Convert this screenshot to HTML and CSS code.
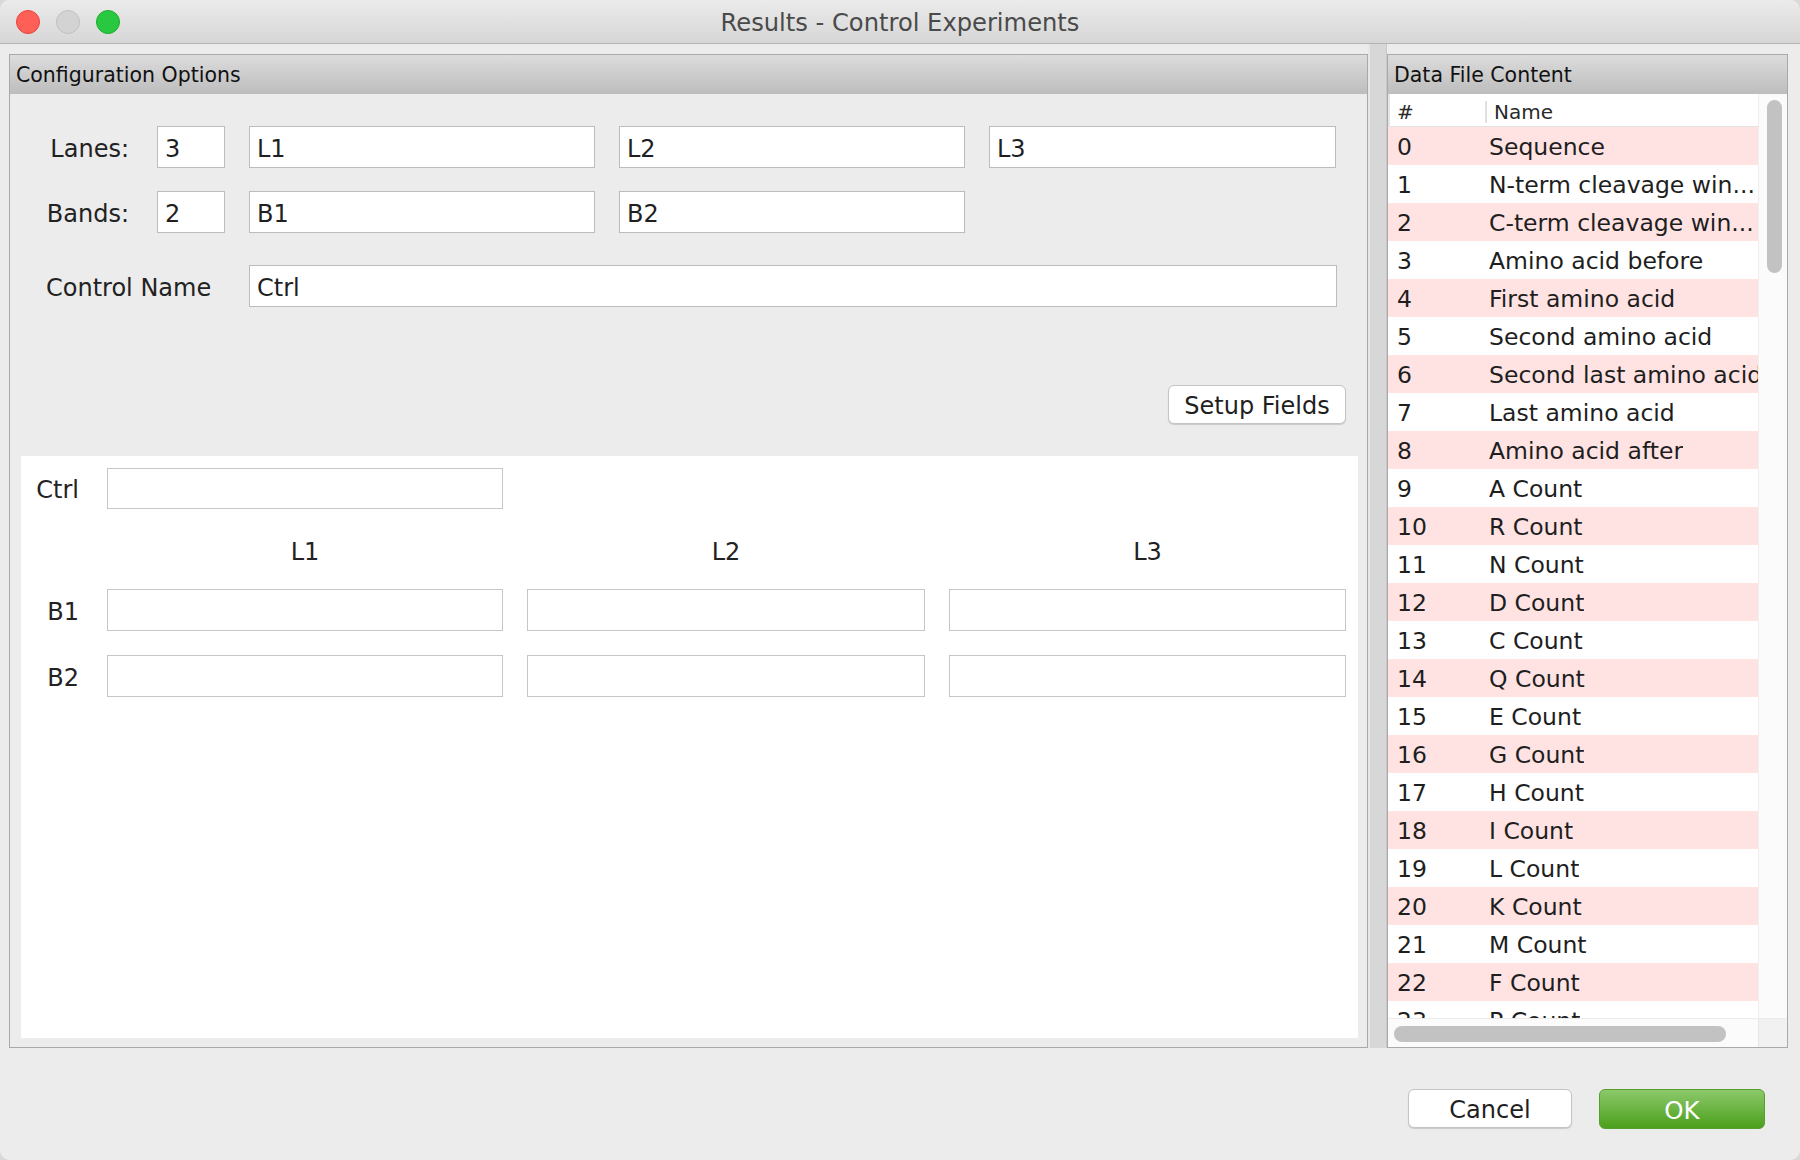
FILE: index.html
```html
<!DOCTYPE html>
<html>
<head>
<meta charset="utf-8">
<title>Results - Control Experiments</title>
<link rel="stylesheet" href="styles.css">
</head>
<body>
<div class="window">
  <div class="titlebar">
    <div class="lights">
      <span class="light red"></span>
      <span class="light gray"></span>
      <span class="light green"></span>
    </div>
    <div class="title">Results - Control Experiments</div>
    <div class="spacer"></div>
  </div>

  <div class="main">
    <section class="panel config">
      <div class="panel-header">Configuration Options</div>
      <div class="config-body">
        <div class="form-row row-lanes">
          <span class="row-label">Lanes:</span>
          <input class="field count" value="3">
          <input class="field name" value="L1">
          <input class="field name" value="L2">
          <input class="field name wide" value="L3">
        </div>
        <div class="form-row row-bands">
          <span class="row-label">Bands:</span>
          <input class="field count" value="2">
          <input class="field name" value="B1">
          <input class="field name" value="B2">
        </div>
        <div class="form-row row-control">
          <span class="row-label control-label">Control Name</span>
          <input class="field control" value="Ctrl">
        </div>
        <div class="setup-row">
          <button class="btn setup">Setup Fields</button>
        </div>
        <div class="grid-panel">
          <div class="grid-row ctrl-row">
            <span class="grid-label">Ctrl</span>
            <input class="field cell" value="">
          </div>
          <div class="grid-row head-row">
            <span></span>
            <span class="col-head">L1</span>
            <span class="col-head">L2</span>
            <span class="col-head">L3</span>
          </div>
          <div class="grid-row band-row">
            <span class="grid-label">B1</span>
            <input class="field cell" value="">
            <input class="field cell" value="">
            <input class="field cell" value="">
          </div>
          <div class="grid-row band-row second">
            <span class="grid-label">B2</span>
            <input class="field cell" value="">
            <input class="field cell" value="">
            <input class="field cell" value="">
          </div>
        </div>
      </div>
    </section>

    <div class="divider"></div>

    <section class="panel data">
      <div class="panel-header">Data File Content</div>
      <div class="data-body">
        <div class="table">
          <div class="thead">
            <span class="th th-num">#</span>
            <span class="th th-name">Name</span>
          </div>
          <div class="tbody">
            <div class="tr"><span class="td num">0</span><span class="td nm">Sequence</span></div>
            <div class="tr"><span class="td num">1</span><span class="td nm">N-term cleavage win...</span></div>
            <div class="tr"><span class="td num">2</span><span class="td nm">C-term cleavage win...</span></div>
            <div class="tr"><span class="td num">3</span><span class="td nm">Amino acid before</span></div>
            <div class="tr"><span class="td num">4</span><span class="td nm">First amino acid</span></div>
            <div class="tr"><span class="td num">5</span><span class="td nm">Second amino acid</span></div>
            <div class="tr"><span class="td num">6</span><span class="td nm">Second last amino acid</span></div>
            <div class="tr"><span class="td num">7</span><span class="td nm">Last amino acid</span></div>
            <div class="tr"><span class="td num">8</span><span class="td nm">Amino acid after</span></div>
            <div class="tr"><span class="td num">9</span><span class="td nm">A Count</span></div>
            <div class="tr"><span class="td num">10</span><span class="td nm">R Count</span></div>
            <div class="tr"><span class="td num">11</span><span class="td nm">N Count</span></div>
            <div class="tr"><span class="td num">12</span><span class="td nm">D Count</span></div>
            <div class="tr"><span class="td num">13</span><span class="td nm">C Count</span></div>
            <div class="tr"><span class="td num">14</span><span class="td nm">Q Count</span></div>
            <div class="tr"><span class="td num">15</span><span class="td nm">E Count</span></div>
            <div class="tr"><span class="td num">16</span><span class="td nm">G Count</span></div>
            <div class="tr"><span class="td num">17</span><span class="td nm">H Count</span></div>
            <div class="tr"><span class="td num">18</span><span class="td nm">I Count</span></div>
            <div class="tr"><span class="td num">19</span><span class="td nm">L Count</span></div>
            <div class="tr"><span class="td num">20</span><span class="td nm">K Count</span></div>
            <div class="tr"><span class="td num">21</span><span class="td nm">M Count</span></div>
            <div class="tr"><span class="td num">22</span><span class="td nm">F Count</span></div>
            <div class="tr"><span class="td num">23</span><span class="td nm">P Count</span></div>
          </div>
        </div>
        <div class="vscroll"><div class="vthumb"></div></div>
      </div>
      <div class="hscroll-row">
        <div class="hscroll"><div class="hthumb"></div></div>
        <div class="corner"></div>
      </div>
    </section>
  </div>

  <div class="footer">
    <button class="btn cancel">Cancel</button>
    <button class="btn ok">OK</button>
  </div>
</div>
</body>
</html>
```

FILE: styles.css
```css
* { box-sizing: border-box; }

html, body {
  margin: 0;
  padding: 0;
  background: #d9d9d9;
}

body {
  font-family: "DejaVu Sans", "Liberation Sans", sans-serif;
  color: #1f1f1f;
}

.window {
  width: 1800px;
  height: 1160px;
  background: #ececec;
  border-radius: 10px;
  overflow: hidden;
  display: flex;
  flex-direction: column;
}

/* Title bar */
.titlebar {
  height: 44px;
  flex: none;
  display: grid;
  grid-template-columns: 1fr auto 1fr;
  align-items: center;
  background: linear-gradient(#ebebeb, #d6d6d6);
  border-bottom: 1px solid #b3b3b3;
}

.lights {
  display: flex;
  gap: 16px;
  padding-left: 16px;
  align-items: center;
}

.light {
  width: 24px;
  height: 24px;
  border-radius: 50%;
  display: block;
}

.light.red { background: #fe5f57; border: 1px solid #e2463f; }
.light.gray { background: #d3d3d3; border: 1px solid #c0c0c0; }
.light.green { background: #28c840; border: 1px solid #1eac2f; }

.title {
  font-size: 24.2px;
  color: #4a4a4a;
  line-height: 1;
  padding-top: 4px;
}

/* Main area */
.main {
  height: 1004px;
  flex: none;
  display: flex;
  padding: 10px 12px 0 9px;
}

.panel {
  border: 1px solid #a9a9a9;
  display: flex;
  flex-direction: column;
}

.panel-header {
  height: 39px;
  flex: none;
  background: linear-gradient(#dcdcdc, #bdbdbd);
  font-size: 20.5px;
  line-height: 39px;
  padding-left: 6px;
  padding-top: 1px;
  color: #111;
}

.config {
  width: 1359px;
  background: #ececec;
}

.divider {
  width: 19px;
  margin-top: -10px;
  background: #d7d7d7;
  border-left: 2px solid #e6e6e6;
  border-right: 1px solid #c9c9c9;
}

.data {
  width: 401px;
  background: #fff;
}

/* Config form */
.config-body {
  flex: 1;
  display: flex;
  flex-direction: column;
}

.form-row {
  display: flex;
  align-items: center;
  gap: 24px;
}

.row-lanes { margin-top: 32px; }
.row-bands { margin-top: 23px; }
.row-control { margin-top: 32px; }

.row-label {
  width: 123px;
  padding-right: 4px;
  padding-top: 3px;
  text-align: right;
  font-size: 24px;
  color: #222;
}

.row-label.control-label {
  width: 215px;
  padding-left: 36px;
  padding-right: 0;
  text-align: left;
}

.field {
  height: 42px;
  border: 1px solid #bcbcbc;
  background: #fff;
  font-family: "DejaVu Sans", "Liberation Sans", sans-serif;
  font-size: 24px;
  color: #1f1f1f;
  padding: 4px 7px 0;
  margin: 0;
  outline: none;
  border-radius: 0;
}

.field.count { width: 68px; }
.field.name { width: 346px; }
.field.name.wide { width: 347px; }
.field.control { width: 1088px; }

.setup-row {
  margin-top: 78px;
  display: flex;
  justify-content: flex-end;
  padding-right: 21px;
}

.btn {
  font-family: "DejaVu Sans", "Liberation Sans", sans-serif;
  font-size: 24px;
  color: #1f1f1f;
  background: #fff;
  border: 1px solid #c4c4c4;
  border-radius: 6px;
  box-shadow: 0 1px 1px rgba(0, 0, 0, 0.15);
  padding: 2px 0 0;
  cursor: default;
}

.btn.setup {
  width: 178px;
  height: 39px;
}

/* White grid panel */
.grid-panel {
  flex: 1;
  margin: 32px 9px 9px 11px;
  background: #fff;
  padding-top: 12px;
}

.grid-row {
  display: grid;
  grid-template-columns: 62px 396px 398px 397px;
  column-gap: 24px;
  align-items: center;
}

.grid-label {
  text-align: right;
  padding-right: 4px;
  padding-top: 3px;
  font-size: 24px;
  color: #222;
}

.field.cell {
  width: 100%;
  height: 41px;
  border-color: #c6c6c6;
}

.ctrl-row { height: 41px; }

.head-row {
  height: 28px;
  margin: 29px 0 23px;
}

.col-head {
  text-align: center;
  font-size: 24px;
  color: #222;
}

.band-row { height: 42px; }
.band-row .field.cell { height: 42px; }
.band-row.second { margin-top: 24px; }

/* Data table */
.data-body {
  flex: none;
  height: 924px;
  display: flex;
}

.table {
  width: 370px;
  display: flex;
  flex-direction: column;
  overflow: hidden;
}

.thead {
  height: 33px;
  flex: none;
  display: flex;
  align-items: center;
  padding-top: 3px;
  border-bottom: 1px solid #e3e3e3;
  border-left: 2px solid #e6e6e6;
  font-size: 20px;
  color: #2a2a2a;
}

.th-num {
  width: 97px;
  padding-left: 7px;
  border-right: 2px solid #e0e0e0;
  line-height: 22px;
}

.th-name {
  padding-left: 7px;
}

.tbody {
  flex: 1;
  overflow: hidden;
}

.tr {
  height: 38px;
  display: flex;
  align-items: center;
  padding-top: 2px;
  font-size: 23.5px;
  color: #1e1e1e;
  white-space: nowrap;
}

.tr:nth-child(odd) { background: #ffe3e3; }

.td.num {
  width: 101px;
  flex: none;
  padding-left: 9px;
}

.td.nm {
  overflow: hidden;
}

.vscroll {
  width: 29px;
  background: #fbfbfb;
  border-left: 1px solid #efefef;
  padding-top: 6px;
}

.vthumb {
  width: 15px;
  height: 173px;
  margin-left: 8px;
  border-radius: 8px;
  background: #c2c2c2;
}

.hscroll-row {
  flex: 1;
  display: flex;
}

.hscroll {
  width: 370px;
  background: #fbfbfb;
  border-top: 1px solid #ececec;
  padding-top: 7px;
}

.hthumb {
  width: 332px;
  height: 16px;
  margin-left: 6px;
  border-radius: 8px;
  background: #c2c2c2;
}

.corner {
  flex: 1;
  background: #f1f1f1;
  border-top: 1px solid #ececec;
  border-left: 1px solid #e6e6e6;
}

/* Footer */
.footer {
  flex: 1;
  display: flex;
  justify-content: flex-end;
  align-items: flex-start;
  gap: 27px;
  padding: 41px 35px 0 0;
}

.btn.cancel {
  width: 164px;
  height: 39px;
}

.btn.ok {
  width: 166px;
  height: 40px;
  color: #fff;
  border: 1px solid #55a02c;
  background: linear-gradient(#8cc96b, #4b9f1c);
  box-shadow: none;
  font-size: 24.5px;
}
```
